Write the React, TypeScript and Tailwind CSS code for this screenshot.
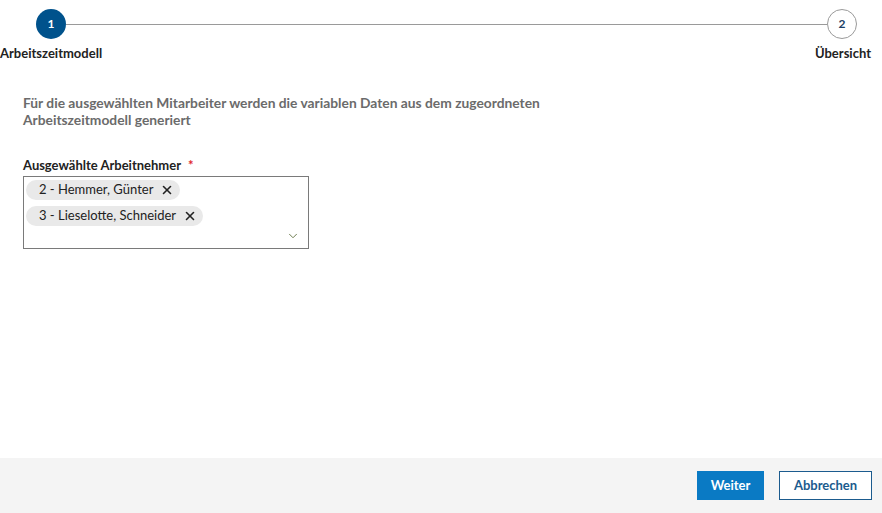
import { X, ChevronDown } from 'lucide-react';

const employees = ['2 - Hemmer, Günter', '3 - Lieselotte, Schneider'];

export default function App() {
  return (
    <div className="flex h-screen flex-col bg-white text-[#333] [font-family:Lato,'Liberation_Sans',sans-serif]">
      {/* Stepper */}
      <div className="pt-[9px]">
        <div className="flex items-center pl-[36px] pr-[25px]">
          <div className="flex h-[30px] w-[30px] items-center justify-center rounded-full bg-[#00528c] text-[12px] font-bold text-white">
            1
          </div>
          <div className="h-px flex-1 bg-[#9a9a9a]" />
          <div className="flex h-[30px] w-[30px] items-center justify-center rounded-full border border-[#9a9a9a] bg-white text-[12px] font-bold text-[#1c3f66]">
            2
          </div>
        </div>
        <div className="mt-[5px] flex justify-between pr-[11px] text-[13px] font-bold text-[#222]">
          <span>Arbeitszeitmodell</span>
          <span>Übersicht</span>
        </div>
      </div>

      {/* Content */}
      <div className="flex-1 px-[23px] pt-[30px]">
        <p className="max-w-[560px] text-[13.8px] font-bold leading-[17px] text-[#6b6b6b]">
          Für die ausgewählten Mitarbeiter werden die variablen Daten aus dem zugeordneten Arbeitszeitmodell generiert
        </p>

        <div className="mt-[28px] text-[13px] font-bold text-[#222]">
          Ausgewählte Arbeitnehmer <span className="ml-[4px] text-[#e0262d]">*</span>
        </div>

        <div className="relative mt-[1px] h-[73px] w-[286px] border border-[#7a7a7a] px-[2px] pt-[3px]">
          <div className="flex flex-col items-start gap-[6px]">
            {employees.map((name) => (
              <div
                key={name}
                className="flex h-[20px] items-center gap-[7px] rounded-full bg-[#e9e9e9] pl-[13px] pr-[6px] text-[13px] text-[#222]"
              >
                <span>{name}</span>
                <X className="h-[14px] w-[14px]" strokeWidth={2.8} />
              </div>
            ))}
          </div>
          <ChevronDown className="absolute bottom-[5px] right-[8px] h-[14px] w-[14px] text-[#5b6b3a]" strokeWidth={1.5} />
        </div>
      </div>

      {/* Footer */}
      <div className="flex h-[55px] items-center justify-end gap-[15px] bg-[#f4f4f4] pr-[10px]">
        <button className="h-[29px] w-[67px] bg-[#0a7ac4] text-[13px] font-bold text-white">Weiter</button>
        <button className="h-[29px] w-[93px] border border-[#1b5b8e] bg-white text-[13px] font-bold text-[#1b5b8e]">
          Abbrechen
        </button>
      </div>
    </div>
  );
}
